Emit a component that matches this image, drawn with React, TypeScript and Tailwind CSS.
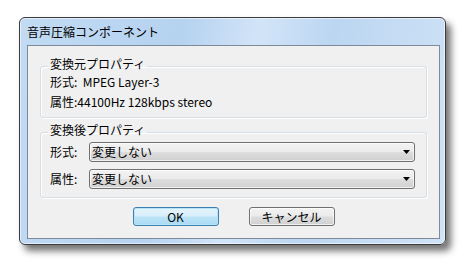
import React from 'react';

const font = "font-['Noto_Sans_CJK_JP',sans-serif]";

function Combo({ value }: { value: string }) {
    return (
        <div className="w-[326px] h-[20px] flex items-center justify-between pl-[2px] pr-[4px] border border-[#707070] rounded-[3px] bg-[linear-gradient(#f3f3f3,#ebebeb_48%,#dddddd_52%,#d0d0d0)] shadow-[inset_0_0_0_1px_rgba(255,255,255,0.7)]">
            <span className="leading-[14px]">{value}</span>
            <svg width="7" height="4" viewBox="0 0 7 4">
                <path d="M0 0h7L3.5 4z" fill="#000" />
            </svg>
        </div>
    );
}

export default function App() {
    return (
        <div className={`w-[468px] h-[269px] bg-white pl-[19px] pt-[17px] text-[12px] text-black ${font}`}>
            <div className="w-[427px] h-[228px] flex flex-col pl-[7px] pr-[5px] pb-[5px] rounded-[6px] border border-[#3c3c3c] bg-[linear-gradient(100deg,#c2dbf3_0%,#b5d2f0_35%,#d2e4f8_52%,#bcd6f1_68%,#d0e3f7_100%)] shadow-[5px_6px_7px_rgba(0,0,0,0.55),inset_0_0_0_1px_rgba(255,255,255,0.55)]">
                {/* title bar */}
                <div className="h-[27px] flex items-center">音声圧縮コンポーネント</div>

                {/* client area */}
                <div className="flex-1 flex flex-col px-[12px] border border-[#7d8a99] bg-[#f0f0f0]">
                    <fieldset className="mt-[11px] border border-[#d5dfe5] rounded-[3px] shadow-[inset_1px_1px_0_#fff,1px_1px_0_#fff]">
                        <legend className="ml-[7px] px-[2px] h-[18px] leading-[14px]">変換元プロパティ</legend>
                        <div className="pl-[9px] pb-[8px] flex flex-col gap-[6px] leading-[14px]">
                            <div>形式:&nbsp; MPEG Layer-3</div>
                            <div>属性:44100Hz 128kbps stereo</div>
                        </div>
                    </fieldset>

                    <fieldset className="mt-[5px] border border-[#d5dfe5] rounded-[3px] shadow-[inset_1px_1px_0_#fff,1px_1px_0_#fff]">
                        <legend className="ml-[7px] px-[2px] h-[18px] leading-[14px]">変換後プロパティ</legend>
                        <div className="pl-[9px] pt-[1px] pb-[8px] flex flex-col gap-[7px]">
                            <div className="flex items-center">
                                <span className="w-[39px]">形式:</span>
                                <Combo value="変更しない" />
                            </div>
                            <div className="flex items-center">
                                <span className="w-[39px]">属性:</span>
                                <Combo value="変更しない" />
                            </div>
                        </div>
                    </fieldset>

                    <div className="mt-[9px] flex justify-center gap-[30px]">
                        <button className="w-[86px] h-[19px] flex items-center justify-center leading-[14px] border border-[#3c7fb1] rounded-[3px] bg-[linear-gradient(#e8f5fc,#d6eefb_48%,#bde4f8_52%,#a9d9f2)] shadow-[inset_0_0_0_1px_#b8e4fa]">
                            OK
                        </button>
                        <button className="w-[86px] h-[19px] flex items-center justify-center leading-[14px] border border-[#707070] rounded-[3px] bg-[linear-gradient(#f3f3f3,#ebebeb_48%,#dddddd_52%,#d0d0d0)] shadow-[inset_0_0_0_1px_rgba(255,255,255,0.7)]">
                            キャンセル
                        </button>
                    </div>
                </div>
            </div>
        </div>
    );
}
